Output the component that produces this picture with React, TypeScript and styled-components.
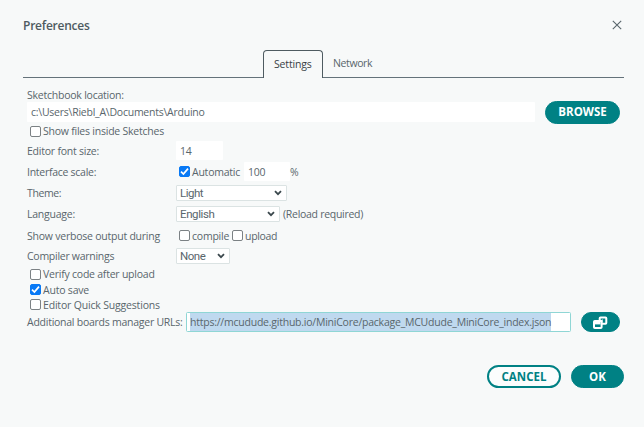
import React from 'react';
import styled, { createGlobalStyle } from 'styled-components';

const GlobalStyle = createGlobalStyle`
  *, *::before, *::after { box-sizing: border-box; }
  body { margin: 0; background: #f7f9f9; }
`;

const Dialog = styled.main`
  width: 644px;
  height: 427px;
  display: flex;
  flex-direction: column;
  background: #f7f9f9;
  color: #59666c;
  font: 10.5px/14px "Open Sans", "Noto Sans", sans-serif;
  white-space: nowrap;
  overflow: hidden;
`;

const Header = styled.header`
  height: 50px;
  padding: 18px 22px 0 23px;
  display: flex;
  justify-content: space-between;
`;

const Title = styled.h1`
  margin: 0;
  font-size: 12px;
  line-height: 16px;
  font-weight: 600;
  letter-spacing: -0.23px;
  color: #4e5b61;
`;

const CloseIcon = styled.svg`
  width: 10px;
  height: 10px;
  margin-top: 2px;
`;

const TabBar = styled.nav`
  height: 25px;
  margin: 0 20px 0 23px;
  display: grid;
  grid-template-columns: 240px 60px 1fr;
`;

const TabLine = styled.div`
  border-bottom: 1px solid #64727a;
  padding-left: 10px;
`;

const Tab = styled.div`
  border: 1px solid #4e5b61;
  border-bottom: 0;
  border-radius: 4px 4px 0 0;
  padding-left: 10px;
  color: #374146;
`;

const Text = styled.span<{ $track?: number; $lh?: number }>`
  letter-spacing: ${p => p.$track ?? -0.23}px;
  line-height: ${p => p.$lh ?? 14}px;
`;

const Form = styled.section`
  height: 257px;
  padding: 13px 24px 0 27px;
  display: flex;
  flex-direction: column;
`;

const Row = styled.div<{ $h: number }>`
  height: ${p => p.$h}px;
  flex: none;
  display: flex;
  align-items: center;
`;

const Label = styled.div`
  width: 149px;
  flex: none;
`;

const Field = styled.div<{ $w: number; $h?: number; $gap?: number }>`
  width: ${p => p.$w}px;
  height: ${p => p.$h ?? 19}px;
  margin-left: ${p => p.$gap ?? 0}px;
  padding-left: 4px;
  flex: none;
  display: flex;
  align-items: center;
  background: #fff;
  border-radius: 1px;
`;

const UrlField = styled(Field)`
  margin-left: auto;
  border: 1px solid #8fd6d5;
  padding-left: 3px;
  align-items: stretch;
  border-radius: 1.5px;
`;

const Selection = styled.div`
  width: 361px;
  background: #bfd9ef;
`;

const SelectBox = styled.div<{ $w: number }>`
  width: ${p => p.$w}px;
  height: 16px;
  padding: 0 4px 0 3px;
  display: flex;
  align-items: center;
  justify-content: space-between;
  background: #fff;
  border: 1px solid #dbe3e3;
  border-radius: 1px;
  font-family: Roboto, sans-serif;
  font-size: 11.5px;
`;

const CheckLabel = styled.div`
  display: flex;
  align-items: center;
  gap: 2px;
  margin-left: 3px;
`;

const Box = styled.span<{ $on?: boolean }>`
  width: 11px;
  height: 11px;
  flex: none;
  display: flex;
  border: 1px solid ${p => (p.$on ? '#0879f5' : '#7b8184')};
  border-radius: 2px;
  background: ${p => (p.$on ? '#0879f5' : '#fff')};
`;

const Button = styled.button<{ $w: number; $h?: number; $outline?: boolean }>`
  width: ${p => p.$w}px;
  height: ${p => p.$h ?? 23}px;
  flex: none;
  padding: 0;
  display: flex;
  align-items: center;
  justify-content: center;
  border: ${p => (p.$outline ? 2 : 1)}px solid #008184;
  border-radius: 12px;
  background: ${p => (p.$outline ? '#fbfdfd' : '#008184')};
  color: ${p => (p.$outline ? '#008184' : '#fff')};
  font: 700 11.5px/14px "Open Sans", sans-serif;
`;

const Push = styled.div<{ $gap?: number }>`
  margin-left: ${p => (p.$gap ? `${p.$gap}px` : 'auto')};
  display: flex;
`;

const Footer = styled.footer`
  padding: 33px 20px 0 0;
  display: flex;
  justify-content: flex-end;
  gap: 10px;
`;

function Check({ text, track, on }: { text: string; track?: number; on?: boolean }) {
  return (
    <CheckLabel>
      <Box $on={on}>
        {on && (
          <svg width="9" height="9" viewBox="0 0 9 9">
            <path d="M1 4.7 3.4 7 8 1.6" fill="none" stroke="#fff" strokeWidth="1.7" />
          </svg>
        )}
      </Box>
      <Text $track={track}>{text}</Text>
    </CheckLabel>
  );
}

function Select({ value, width, track = -0.48 }: { value: string; width: number; track?: number }) {
  return (
    <SelectBox $w={width}>
      <Text $track={track}>{value}</Text>
      <svg width="8" height="6" viewBox="0 0 8 6">
        <path d="M1 1.2 4 4.2 7 1.2" fill="none" stroke="#3b484d" strokeWidth="1.8" />
      </svg>
    </SelectBox>
  );
}

export default function App() {
  return (
    <Dialog>
      <GlobalStyle />
      <Header>
        <Title>Preferences</Title>
        <CloseIcon viewBox="0 0 10 10">
          <path d="M.8.8 9.2 9.2M9.2.8.8 9.2" fill="none" stroke="#59666c" strokeWidth="1.1" />
        </CloseIcon>
      </Header>
      <TabBar>
        <TabLine />
        <Tab><Text $lh={26} $track={-0.17}>Settings</Text></Tab>
        <TabLine><Text $lh={27} $track={-0.38}>Network</Text></TabLine>
      </TabBar>
      <Form>
        <Row $h={14}><Text>Sketchbook location:</Text></Row>
        <Row $h={20}>
          <Field $w={508} $h={20}><Text $track={-0.24}>c:\Users\Riebl_A\Documents\Arduino</Text></Field>
          <Push><Button $w={75}>BROWSE</Button></Push>
        </Row>
        <Row $h={18}><Check text="Show files inside Sketches" /></Row>
        <Row $h={21}>
          <Label><Text>Editor font size:</Text></Label>
          <Field $w={47}><Text>14</Text></Field>
        </Row>
        <Row $h={21}>
          <Label><Text $track={-0.27}>Interface scale:</Text></Label>
          <Check text="Automatic" on />
          <Field $w={46} $gap={4}><Text>100</Text></Field>
          <Text>%</Text>
        </Row>
        <Row $h={21}>
          <Label><Text $track={-0.4}>Theme:</Text></Label>
          <Select value="Light" width={111} />
        </Row>
        <Row $h={22}>
          <Label><Text>Language:</Text></Label>
          <Select value="English" width={104} track={-0.39} />
          <CheckLabel><Text $track={-0.28}>(Reload required)</Text></CheckLabel>
        </Row>
        <Row $h={21}>
          <Label><Text>Show verbose output during</Text></Label>
          <Check text="compile" />
          <Check text="upload" track={-0.35} />
        </Row>
        <Row $h={20}>
          <Label><Text $track={-0.27}>Compiler warnings</Text></Label>
          <Select value="None" width={54} />
        </Row>
        <Row $h={16}><Check text="Verify code after upload" /></Row>
        <Row $h={15}><Check text="Auto save" on track={-0.2} /></Row>
        <Row $h={15}><Check text="Editor Quick Suggestions" track={-0.18} /></Row>
        <Row $h={20}>
          <Text $track={-0.25}>Additional boards manager URLs:</Text>
          <UrlField $w={385} $h={20}>
            <Selection><Text $lh={18} $track={-0.23}>https://mcudude.github.io/MiniCore/package_MCUdude_MiniCore_index.json</Text></Selection>
          </UrlField>
          <Push $gap={10}>
            <Button $w={39} $h={20} aria-label="Expand URL list">
              <svg width="15" height="13" viewBox="0 0 15 13">
                <rect x="6.7" y="1.5" width="6.6" height="6.2" rx="0.8" fill="none" stroke="#fff" strokeWidth="2" />
                <rect x="1" y="5" width="7.6" height="7" rx="0.8" fill="#008184" stroke="#fff" strokeWidth="2" />
                <path d="M2 6h5.6v2.4H2z" fill="#fff" />
                <path d="M6 5.2 9.8 3.2 9.6 6.4Z" fill="#fff" />
              </svg>
            </Button>
          </Push>
        </Row>
      </Form>
      <Footer>
        <Button $w={74} $outline>CANCEL</Button>
        <Button $w={53}>OK</Button>
      </Footer>
    </Dialog>
  );
}
